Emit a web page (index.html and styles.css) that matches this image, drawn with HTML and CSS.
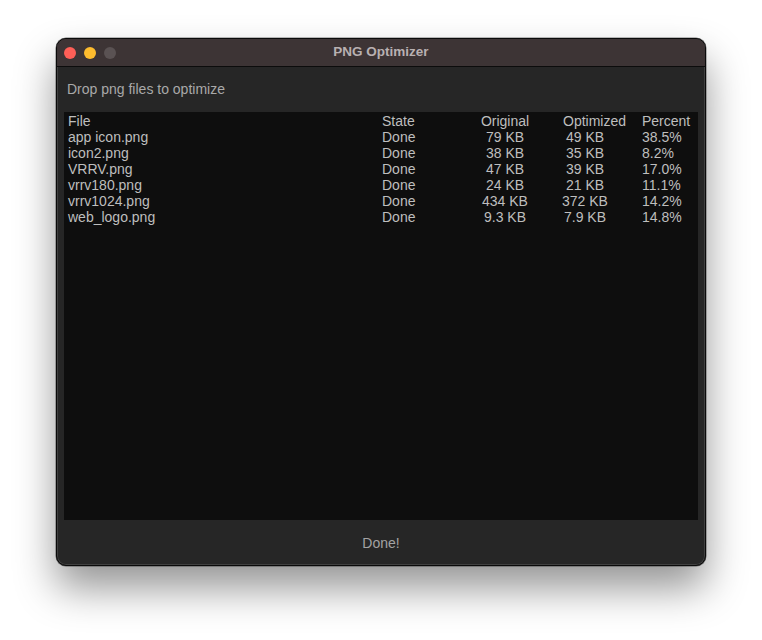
FILE: index.html
```html
<!DOCTYPE html>
<html>
<head>
<meta charset="utf-8">
<link rel="stylesheet" href="styles.css">
</head>
<body>
<div class="window">
  <div class="titlebar">
    <div class="lights">
      <span class="light red"></span>
      <span class="light yellow"></span>
      <span class="light grey"></span>
    </div>
    <div class="title">PNG Optimizer</div>
  </div>
  <div class="drop">Drop png files to optimize</div>
  <div class="table">
    <div class="row head">
      <span class="c-file">File</span>
      <span class="c-state">State</span>
      <span class="c-orig">Original</span>
      <span class="c-opt opt-head">Optimized</span>
      <span class="c-pct">Percent</span>
    </div>
    <div class="row">
      <span class="c-file">app icon.png</span><span class="c-state">Done</span><span class="c-orig">79 KB</span><span class="c-opt">49 KB</span><span class="c-pct">38.5%</span>
    </div>
    <div class="row">
      <span class="c-file">icon2.png</span><span class="c-state">Done</span><span class="c-orig">38 KB</span><span class="c-opt">35 KB</span><span class="c-pct">8.2%</span>
    </div>
    <div class="row">
      <span class="c-file">VRRV.png</span><span class="c-state">Done</span><span class="c-orig">47 KB</span><span class="c-opt">39 KB</span><span class="c-pct">17.0%</span>
    </div>
    <div class="row">
      <span class="c-file">vrrv180.png</span><span class="c-state">Done</span><span class="c-orig">24 KB</span><span class="c-opt">21 KB</span><span class="c-pct">11.1%</span>
    </div>
    <div class="row">
      <span class="c-file">vrrv1024.png</span><span class="c-state">Done</span><span class="c-orig">434 KB</span><span class="c-opt">372 KB</span><span class="c-pct">14.2%</span>
    </div>
    <div class="row">
      <span class="c-file">web_logo.png</span><span class="c-state">Done</span><span class="c-orig">9.3 KB</span><span class="c-opt">7.9 KB</span><span class="c-pct">14.8%</span>
    </div>
  </div>
  <div class="footer">Done!</div>
</div>
</body>
</html>
```
FILE: styles.css
```css
* { box-sizing: border-box; }
html, body {
  margin: 0;
  background: #ffffff;
}
body {
  padding: 38px 0 0 56px;
  font-family: "Liberation Sans", Arial, sans-serif;
  height: 640px;
  overflow: hidden;
}
.window {
  width: 650px;
  height: 528px;
  background: #262626;
  border: 1px solid #0a0a0a;
  border-radius: 10px;
  overflow: hidden;
  display: flex;
  flex-direction: column;
  box-shadow: 0 22px 40px rgba(0,0,0,0.42), 0 0 0 0.5px rgba(0,0,0,0.5), inset 0 0 0 1px rgba(255,255,255,0.12);
}
.titlebar {
  height: 28px;
  flex: none;
  background: #3d3435;
  border-bottom: 1px solid #0c0c0c;
  display: flex;
  align-items: center;
  position: relative;
}
.lights {
  display: flex;
  gap: 8px;
  padding-left: 7px;
}
.light {
  width: 12px;
  height: 12px;
  border-radius: 50%;
  display: block;
}
.red { background: #fe5f57; }
.yellow { background: #febc2e; }
.grey { background: #5a5253; }
.title {
  position: absolute;
  left: 0;
  right: 0;
  top: 0;
  line-height: 26px;
  text-align: center;
  font-size: 13.5px;
  font-weight: bold;
  color: #b8b0b1;
}
.drop {
  height: 45px;
  flex: none;
  padding: 14px 0 0 10px;
  font-size: 14px;
  line-height: 16px;
  color: #a9a9a9;
}
.table {
  margin: 0 7px;
  height: 408px;
  flex: none;
  background: #0e0e0e;
  padding-top: 1px;
}
.row {
  display: grid;
  grid-template-columns: 318px 83px 80px 80px 1fr;
  height: 16px;
  line-height: 16px;
  font-size: 14px;
  color: #bebebe;
  white-space: nowrap;
}
.c-file { padding-left: 4px; }
.c-orig, .c-opt { text-align: center; }
.opt-head { text-align: left; padding-left: 18px; }
.c-pct { padding-left: 17px; }
.footer {
  flex: 1;
  display: flex;
  align-items: center;
  justify-content: center;
  font-size: 14px;
  color: #a3a3a3;
  padding-top: 1px;
}
```
